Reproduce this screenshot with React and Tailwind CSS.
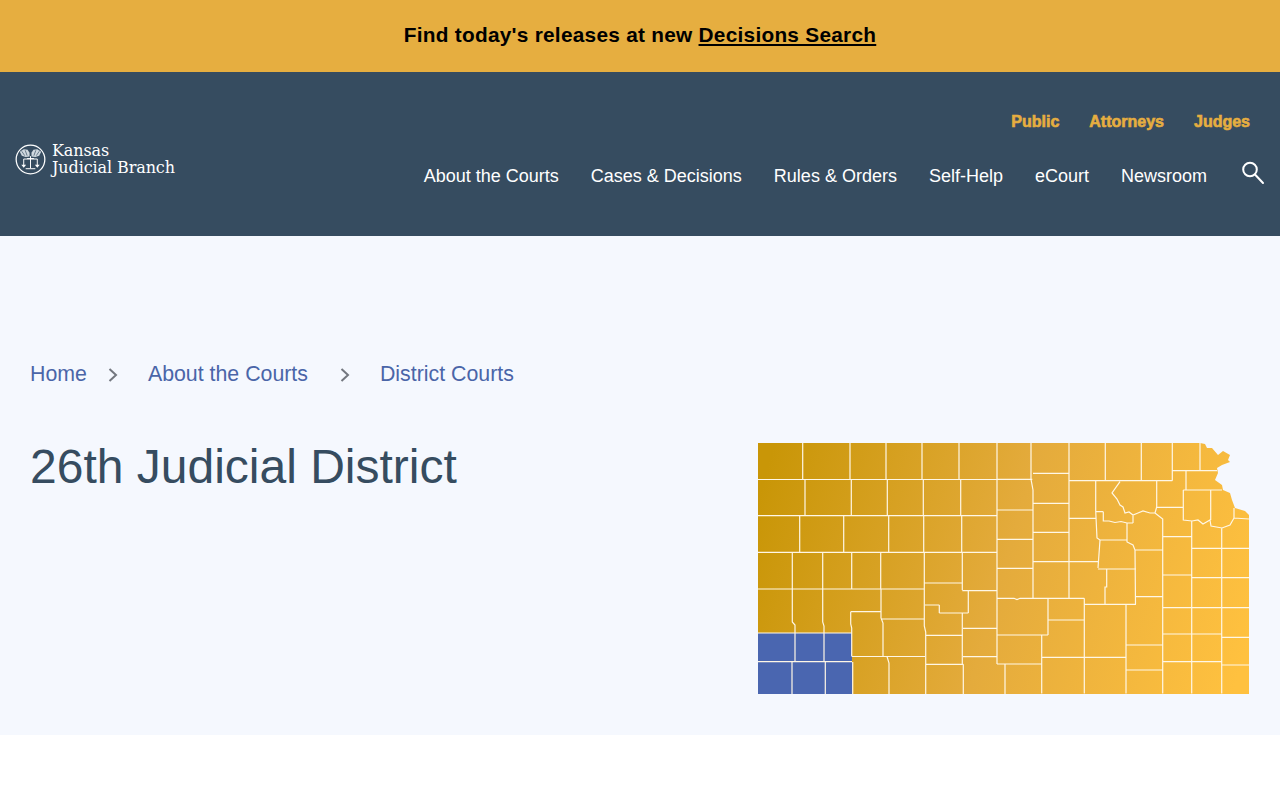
const mainNav = ['About the Courts', 'Cases & Decisions', 'Rules & Orders', 'Self-Help', 'eCourt', 'Newsroom'];
const userNav = ['Public', 'Attorneys', 'Judges'];

const outline =
  'M758 443 L1200 443 L1205 444 L1207 448 L1212 448 L1218 455 L1223 451 L1230 455 L1228 460 L1230 462 L1222 465 L1217 468 L1218 473 L1215 480 L1222 485 L1223 490 L1230 493 L1232 500 L1235 508 L1245 511 L1249 515 L1249 519 L1249 694 L758 694 Z';

// county borders, in page coordinates
const borders = [
  'M758 479.5H997M758 515.7H997M758 552.3H997M758 589H924',
  'M802.7 443V479.5M850 443V479.5M886 443V479.5M922 443V479.5M959 443V479.5',
  'M805 479.5V515.7M851.3 479.5V515.7M887.3 479.5V515.7M923.3 479.5V515.7M960.7 479.5V515.7',
  'M799.7 515.7V552.3M843.7 515.7V552.3M888.7 515.7V552.3M923.7 515.7V552.3M961.7 515.7V552.3',
  'M792.3 552.3V622L795 625V633M822.7 552.3V622L824 626V633M851.7 552.3V589M880.7 552.3V589',
  'M850.7 611.7H881M850.7 611.7V624L851.7 628V656.5M881 589V618L883 623V656.5M881 619H924',
  'M852 656.5H925M887 656.5L889 663V694M852.7 662V694',
  'M758 633H852M758 661.7H852M795 633V661.7M824 633V661.7M792 661.7V694M825.3 661.7V694',
  'M924.3 552.3V626L925.7 632V694M924 583H962.3M962.3 552.3V590M962.3 590.7H997M968.3 590.7V613M939.3 613H968.3M939.3 605V613M925 605H939.3',
  'M962.3 613V664.3M926 635.3H963M926 664.3H963.3M963.3 664.3V694M963 628.3H997M963 656.7H997M997 443V664M997 664H1005M1005 664V694',
  'M997 479.3H1032.3M997 510H1033M997 539.3H1033M997 568.3H1033M997 598.3H1014L1017 599.5L1020 598.3H1084.3',
  'M1031 443V479.3L1033 490V598.3M1033 473.3H1069M1033 503.3H1069M1033 532.3H1069M1033 561.7H1069M1069 443V598.3',
  'M1105.3 443V480.7M1141.3 443V480.7M1172.3 443V480.7M1200 443V470.7M1069 480.7H1172.3M1172.3 470.7H1217M1186 470.7V490M1183.3 490H1222',
  'M1095.7 481V511L1097 538L1100 540L1098 568M1069 518.3H1096M1096 511.7H1103.3M1103.3 511.7V521L1109 521L1115 522.5L1121 521.5L1127 523H1133M1133 515V523',
  'M1127 523V542L1133 545L1135 550L1135.5 604.3M1100 540H1127M1135 550H1163M1098 569H1136M1106.7 569V587L1105 587V604.3M1084.3 604.3H1136M1069 561.7H1098',
  'M1084.3 598.3V693.5M1048 620H1084.3M1048 598.3V635M997 635H1048M1041.7 635V693.5M1005 664H1041.7M1041.7 657.3H1126',
  'M1126 604.3V693.5M1126 645H1163M1126 670H1163M1136 596.7H1163M1155 513L1162.7 519V693.5',
  'M1163 536.7H1191.7M1163 575H1191.7M1163 607.7H1249M1163 634H1221.7M1163 661.7H1221.7M1191.7 521V693.5M1191.7 548.3H1249M1191.7 577.7H1249M1221.7 528V693.5M1221.7 637.3H1249M1221.7 665H1249',
  'M1156.7 481V507L1155 513M1156.7 507.3H1183.3M1183.3 490V520L1192 521L1198 520L1203 524L1210 520L1211 526L1222 528L1230 525L1234 518L1249 519M1210.7 490V520M1234 508V518',
  'M1120 481.7L1112 493L1117 499L1120 505L1123 507L1125 513L1129 512L1133 515L1138 513L1143 511L1150 513L1155 513',
];

function KansasMap() {
  return (
    <svg className="w-[492px] h-[252px] shrink-0" viewBox="758 443 492 252">
      <defs>
        <linearGradient id="mapFill" gradientUnits="userSpaceOnUse" x1="758" y1="500" x2="1249" y2="640">
          <stop offset="0" stopColor="#c99607" />
          <stop offset="0.5" stopColor="#e4ab3c" />
          <stop offset="1" stopColor="#ffc13f" />
        </linearGradient>
      </defs>
      <path d={outline} fill="url(#mapFill)" />
      <rect x="758" y="633" width="94" height="61" fill="#4a66b0" />
      <path d={borders.join(' ')} fill="none" stroke="#fff7e6" strokeWidth="1.2" />
    </svg>
  );
}

function Seal() {
  return (
    <svg className="w-[31px] h-[31px] shrink-0" viewBox="0 0 32 32">
      <circle cx="16" cy="16" r="14.8" fill="none" stroke="#fff" strokeWidth="1.3" />
      <path d="M5 8L9 5.5L13 6L15 9L15 13L11 13.5L7 12Z" fill="#cfd8df" />
      <path d="M27 8L23 5.5L19 6L17 9L17 13L21 13.5L25 12Z" fill="#cfd8df" />
      <path d="M7 7.5L10 12M10.5 6.5L12.5 12M25 7.5L22 12M21.5 6.5L19.5 12" stroke="#364c60" strokeWidth="0.7" />
      <path d="M16 12.5V25M12.5 15H19.5M9 15.5V22M23 15.5V22M9 15.5H23M11 25.5H21" fill="none" stroke="#fff" strokeWidth="1" />
      <path d="M6.5 21.5H11.5L9 24.5ZM20.5 21.5H25.5L23 24.5Z" fill="#fff" />
    </svg>
  );
}

function SearchIcon() {
  return (
    <svg className="w-[24px] h-[24px]" viewBox="0 0 24 24" fill="none" stroke="#fff" strokeWidth="2">
      <circle cx="9" cy="8.5" r="6.8" />
      <path d="M14 13.5L22 22" strokeLinecap="round" />
    </svg>
  );
}

function Chevron() {
  return (
    <svg className="w-[10px] h-[16px] mt-[8px] shrink-0" viewBox="0 0 10 16" fill="none" stroke="#73777f" strokeWidth="2">
      <path d="M1.5 2L8 8L1.5 14" />
    </svg>
  );
}

export default function App() {
  return (
    <div className="min-h-[800px] bg-white font-['Liberation_Sans',Arial,sans-serif]">
      <div className="h-[72px] pb-[2px] bg-[#e6ae40] flex items-center justify-center text-black text-[20.8px] font-bold tracking-[0.27px]">
        <span>
          Find today's releases at new <a className="underline">Decisions Search</a>
        </span>
      </div>

      <header className="h-[164px] bg-[#364c60] flex justify-between pl-[15px] pr-[15px]">
        <div className="flex items-center gap-[6px] mt-[10px]">
          <Seal />
          <div className="font-['DejaVu_Serif',serif] text-white text-[16px] leading-[17px] tracking-[-0.1px]">
            <div>Kansas</div>
            <div>Judicial Branch</div>
          </div>
        </div>
        <div className="flex flex-col items-end pt-[41px]">
          <div className="flex gap-[30px] pr-[15px] h-[18px] items-center text-[#e6ae40] text-[16px] font-bold leading-none [-webkit-text-stroke:0.6px_#e6ae40]">
            {userNav.map((item) => (
              <a key={item}>{item}</a>
            ))}
          </div>
          <div className="flex items-center mt-[25px] text-white text-[18px]">
            <nav className="flex gap-[32px] mt-[7px]">
              {mainNav.map((item) => (
                <a key={item}>{item}</a>
              ))}
            </nav>
            <button className="ml-[34px] -mt-[1px]">
              <SearchIcon />
            </button>
          </div>
        </div>
      </header>

      <section className="h-[499px] bg-[#f5f8fe] px-[30px] pt-[123px]">
        <div className="flex items-start text-[21.33px] leading-[30px] text-[#4a65a8]">
          <a>Home</a>
          <div className="ml-[21px] mr-[30px]"><Chevron /></div>
          <a>About the Courts</a>
          <div className="ml-[32px] mr-[30px]"><Chevron /></div>
          <a>District Courts</a>
        </div>
        <div className="flex justify-between items-start mt-[54px]">
          <h1 className="text-[48px] leading-[48px] text-[#364c60]">26th Judicial District</h1>
          <KansasMap />
        </div>
      </section>
    </div>
  );
}
